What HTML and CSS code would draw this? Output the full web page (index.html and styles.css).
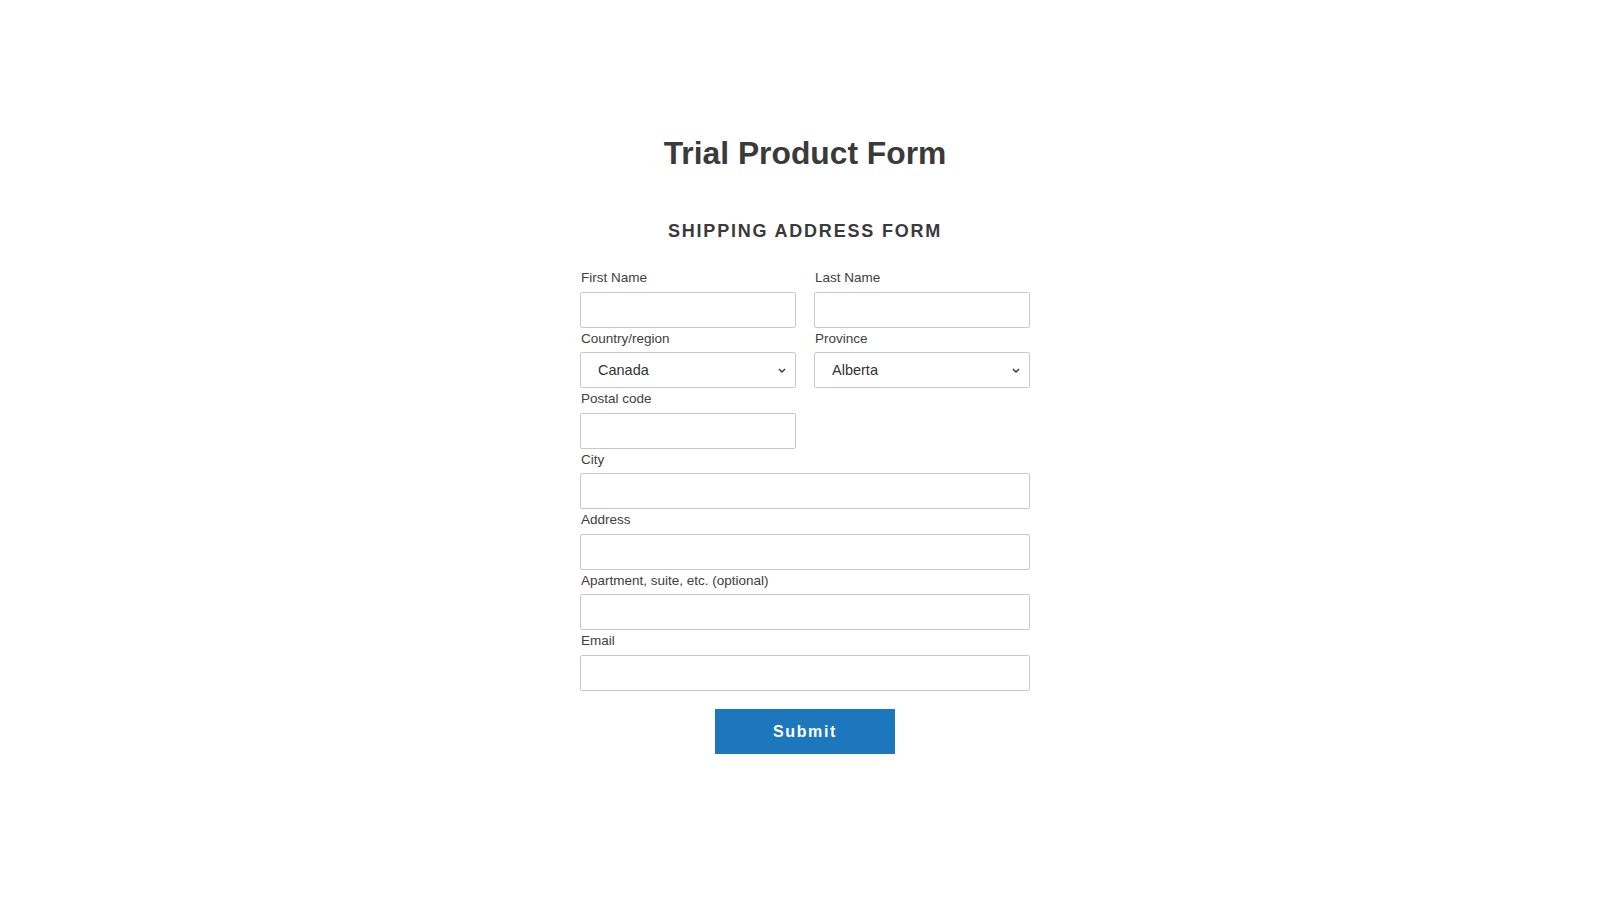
FILE: index.html
```html
<!DOCTYPE html>
<html lang="en">
<head>
<meta charset="utf-8">
<title>Trial Product Form</title>
<link rel="stylesheet" href="styles.css">
</head>
<body>
<main class="page">
  <h1 class="title">Trial Product Form</h1>
  <h2 class="subtitle">Shipping Address Form</h2>
  <form class="form">
    <div class="grid">
      <div class="field">
        <label class="label" for="fn">First Name</label>
        <input class="input" id="fn" type="text">
      </div>
      <div class="field">
        <label class="label" for="ln">Last Name</label>
        <input class="input" id="ln" type="text">
      </div>
      <div class="field">
        <label class="label" for="country">Country/region</label>
        <div class="select-wrap">
          <select class="input select" id="country"><option>Canada</option></select>
          <svg class="chev" width="8" height="5" viewBox="0 0 8 5"><path d="M1 1l3 3 3-3" fill="none" stroke="#333" stroke-width="1.4"/></svg>
        </div>
      </div>
      <div class="field">
        <label class="label" for="prov">Province</label>
        <div class="select-wrap">
          <select class="input select" id="prov"><option>Alberta</option></select>
          <svg class="chev" width="8" height="5" viewBox="0 0 8 5"><path d="M1 1l3 3 3-3" fill="none" stroke="#333" stroke-width="1.4"/></svg>
        </div>
      </div>
      <div class="field">
        <label class="label" for="postal">Postal code</label>
        <input class="input" id="postal" type="text">
      </div>
      <div class="field"></div>
      <div class="field full">
        <label class="label" for="city">City</label>
        <input class="input" id="city" type="text">
      </div>
      <div class="field full">
        <label class="label" for="addr">Address</label>
        <input class="input" id="addr" type="text">
      </div>
      <div class="field full">
        <label class="label" for="apt">Apartment, suite, etc. (optional)</label>
        <input class="input" id="apt" type="text">
      </div>
      <div class="field full">
        <label class="label" for="email">Email</label>
        <input class="input" id="email" type="email">
      </div>
    </div>
    <div class="actions">
      <button class="submit" type="button">Submit</button>
    </div>
  </form>
</main>
</body>
</html>
```

FILE: styles.css
```css
* { box-sizing: border-box; }
html, body { margin: 0; padding: 0; background: #fff; }
body {
  font-family: "Liberation Sans", Arial, Helvetica, sans-serif;
  color: #3a3a3a;
}
.page {
  display: flex;
  flex-direction: column;
  align-items: center;
  padding: 133px 0 0 10px;
}
.title {
  margin: 0;
  font-size: 31.8px;
  line-height: 40px;
  font-weight: 700;
  color: #3a3a3a;
}
.subtitle {
  margin: 46px 0 0;
  font-size: 18px;
  line-height: 24px;
  font-weight: 700;
  letter-spacing: 1.8px;
  text-transform: uppercase;
  color: #3a3a3a;
}
.form {
  width: 450px;
  margin-top: 24px;
}
.grid {
  display: grid;
  grid-template-columns: 216px 216px;
  column-gap: 18px;
}
.field { display: flex; flex-direction: column; }
.full { grid-column: 1 / -1; }
.label {
  font-size: 13.5px;
  line-height: 20.5px;
  margin: 1px 0 3px;
  padding-left: 1px;
  color: #404040;
}
.input {
  height: 36px;
  width: 100%;
  border: 1px solid #c9c9c9;
  border-radius: 2px;
  background: #fff;
  font-family: inherit;
  font-size: 14.5px;
  color: #333;
  padding: 0 10px;
  margin: 0;
  outline: none;
}
.select-wrap { position: relative; }
.select {
  appearance: none;
  -webkit-appearance: none;
  padding-left: 17px;
}
.chev {
  position: absolute;
  right: 10px;
  top: 16px;
  pointer-events: none;
}
.actions {
  display: flex;
  justify-content: center;
  margin-top: 18px;
}
.submit {
  width: 180px;
  height: 45px;
  padding: 2px 0 0;
  border: none;
  border-radius: 0;
  background: #1c77bc;
  color: #fff;
  font-family: inherit;
  font-size: 16px;
  font-weight: 700;
  letter-spacing: 1.6px;
  cursor: pointer;
}
```
